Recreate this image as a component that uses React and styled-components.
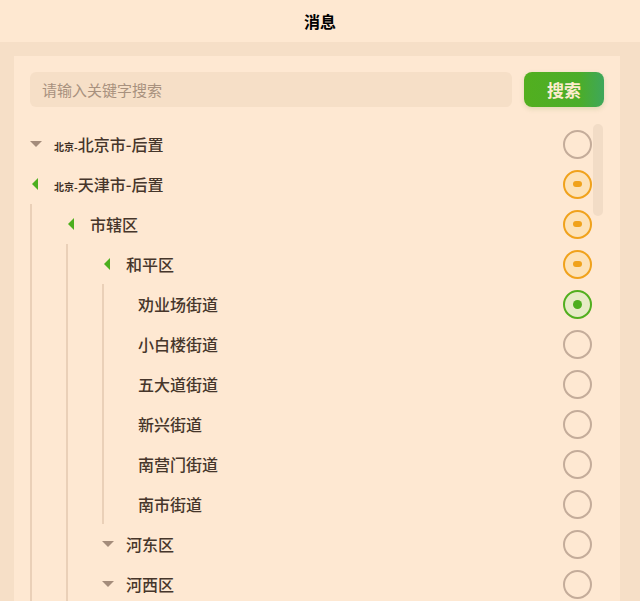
import React from 'react';
import styled, { createGlobalStyle } from 'styled-components';

const GlobalStyle = createGlobalStyle`
    html, body {
        margin: 0;
        padding: 0;
        overflow: hidden;
        background-color: #f6dfc7;
    }
    * {
        box-sizing: border-box;
    }
`

const tree = [
    {
        prefix: "北京-", label: "北京市-后置", state: "none", open: false,
        children: [{ label: "市辖区", state: "none" }]
    },
    {
        prefix: "北京-", label: "天津市-后置", state: "partial", open: true,
        children: [
            {
                label: "市辖区", state: "partial", open: true,
                children: [
                    {
                        label: "和平区", state: "partial", open: true,
                        children: [
                            { label: "劝业场街道", state: "checked" },
                            { label: "小白楼街道", state: "none" },
                            { label: "五大道街道", state: "none" },
                            { label: "新兴街道", state: "none" },
                            { label: "南营门街道", state: "none" },
                            { label: "南市街道", state: "none" }
                        ]
                    },
                    { label: "河东区", state: "none", open: false, children: [{ label: "大王庄街道", state: "none" }] },
                    { label: "河西区", state: "none", open: false, children: [{ label: "大营门街道", state: "none" }] }
                ]
            }
        ]
    }
];

function TreeNode({ node, level }) {
    const hasChildren = node.children && node.children.length > 0;

    return (
        <>
            <Row $level={level}>
                {hasChildren && (
                    <CaretSlot>
                        <Caret $open={node.open} />
                    </CaretSlot>
                )}
                <Label>
                    {node.prefix && <Prefix>{node.prefix}</Prefix>}
                    {node.label}
                </Label>
                <Radio $state={node.state}>
                    {node.state !== "none" && <Mark $state={node.state} />}
                </Radio>
            </Row>
            {hasChildren && node.open && (
                <ChildGroup $level={level}>
                    {node.children.map((child, i) => (
                        <TreeNode key={i} node={child} level={level + 1} />
                    ))}
                </ChildGroup>
            )}
        </>
    );
}

export default function App() {
    return (
        <Screen>
            <GlobalStyle />
            <Header>消息</Header>
            <Body>
                <Card>
                    <SearchBar>
                        <SearchInput type="text" placeholder="请输入关键字搜索" />
                        <SearchButton>搜索</SearchButton>
                    </SearchBar>
                    <TreeView>
                        {tree.map((node, i) => (
                            <TreeNode key={i} node={node} level={0} />
                        ))}
                        <ScrollThumb />
                    </TreeView>
                </Card>
            </Body>
        </Screen>
    );
}

const Screen = styled.div`
    width: 100%;
    height: 100vh;
    display: flex;
    flex-direction: column;
    overflow: hidden;
    font-family: "Noto Sans CJK SC", "Noto Sans", sans-serif;
`
const Header = styled.div`
    height: 42px;
    flex-shrink: 0;
    background-color: #fee8d1;
    display: flex;
    align-items: center;
    justify-content: center;
    font-size: 16px;
    font-weight: 700;
    color: #000000;
`
const Body = styled.div`
    flex: 1;
    background-color: #f6dfc7;
    padding: 14px 20px 0 14px;
    overflow: hidden;
`
const Card = styled.div`
    background-color: #fee8d2;
    padding: 16px 16px 0 16px;
    min-height: 100%;
`
const SearchBar = styled.div`
    display: flex;
    gap: 12px;
    height: 35px;
`
const SearchInput = styled.input`
    flex: 1;
    border: none;
    outline: none;
    border-radius: 6px;
    background-color: #f6dfc7;
    padding: 0 12px;
    font-family: inherit;
    font-size: 15px;
    color: #4a3a2e;

    &::placeholder {
        color: #a8917e;
    }
`
const SearchButton = styled.button`
    width: 80px;
    border: none;
    border-radius: 8px;
    background: linear-gradient(90deg, #52af1f 0%, #4bad2a 70%, #3ea75b 100%);
    color: #fdeccd;
    font-family: inherit;
    font-size: 17px;
    font-weight: 700;
    box-shadow: 0 2px 5px rgba(90, 140, 40, 0.18);
    cursor: pointer;
`
const TreeView = styled.div`
    position: relative;
    margin-top: 17px;
`
const Row = styled.div`
    height: 40px;
    display: flex;
    align-items: center;
    padding-left: ${p => p.$level * 36}px;
    padding-right: 12px;
`
const CaretSlot = styled.div`
    width: 12px;
    height: 12px;
    margin-right: 12px;
    display: flex;
    align-items: center;
    justify-content: center;
`
const Caret = styled.div`
    width: 0;
    height: 0;
    border-style: solid;
    ${p => p.$open ? `
        border-width: 6px 6px 6px 0;
        border-color: transparent #4cae1e transparent transparent;
        margin-left: -2px;
    ` : `
        border-width: 6px 6px 0 6px;
        border-color: #a48c7b transparent transparent transparent;
    `}
`
const Label = styled.div`
    flex: 1;
    font-size: 16px;
    font-weight: 500;
    color: #46362b;
    white-space: nowrap;
`
const Prefix = styled.span`
    font-size: 10px;
    font-weight: 700;
    color: #3e2f25;
`
const Radio = styled.div`
    width: 29px;
    height: 29px;
    border-radius: 50%;
    border: 2px solid ${p => p.$state === "checked" ? "#52af1f" : p.$state === "partial" ? "#f0a21c" : "#c4ac9a"};
    background-color: ${p => p.$state === "checked" ? "#e7ebc6" : p.$state === "partial" ? "#fde2b8" : "transparent"};
    display: flex;
    align-items: center;
    justify-content: center;
    flex-shrink: 0;
`
const Mark = styled.div`
    width: 9px;
    height: ${p => p.$state === "checked" ? "9px" : "6px"};
    border-radius: ${p => p.$state === "checked" ? "50%" : "3px"};
    background-color: ${p => p.$state === "checked" ? "#4cae1e" : "#f0a21c"};
`
const ChildGroup = styled.div`
    position: relative;

    &::before {
        content: "";
        position: absolute;
        top: 0;
        bottom: 0;
        left: ${p => p.$level * 36}px;
        width: 2px;
        background-color: #ead0b8;
    }
`
const ScrollThumb = styled.div`
    position: absolute;
    top: 0;
    right: 1px;
    width: 10px;
    height: 92px;
    border-radius: 5px;
    background-color: #f2dcc6;
`
